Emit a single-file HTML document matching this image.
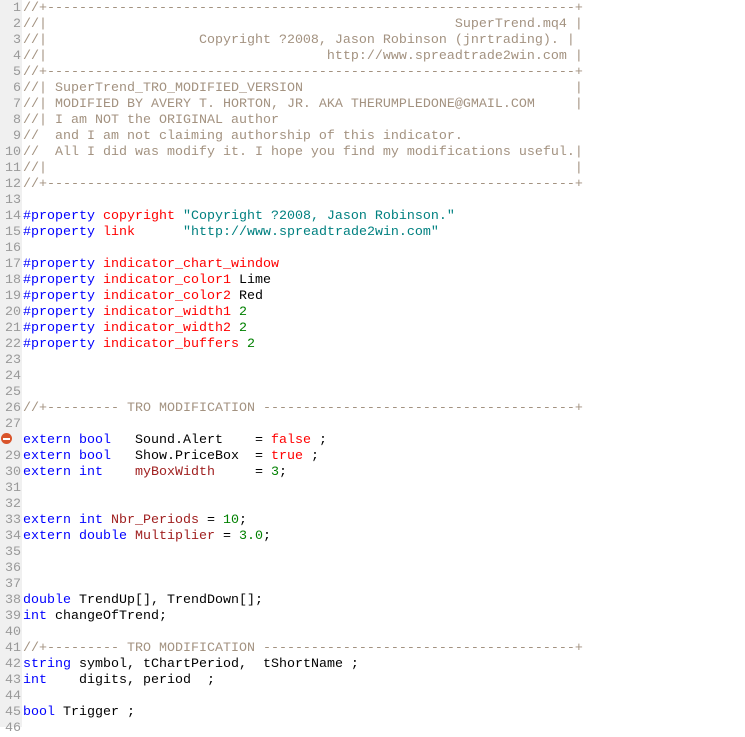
<!DOCTYPE html>
<html><head><meta charset="utf-8"><style>
html,body{margin:0;padding:0;background:#fff;width:745px;height:727px;overflow:hidden}
.g{position:absolute;left:0;top:0;width:22px;height:727px;background:#f0f0f0}
.n{position:absolute;left:0;top:1px;width:21px;text-align:right;font:13.33px/16px "Liberation Mono",monospace;color:#999;white-space:pre;margin:0}
.c{position:absolute;left:23px;top:1px;font:13.33px/16px "Liberation Mono",monospace;color:#000;white-space:pre;margin:0}
.m{color:#a39280}.k{color:#0000ff}.r{color:#ff0000}.s{color:#008080}.d{color:#008000}.v{color:#a02020}
.bp{position:absolute;left:1px;top:433px;width:11px;height:11px;border-radius:50%;background:#d9542b}
.bp:after{content:"";position:absolute;left:2px;top:4.5px;width:7px;height:2px;background:#fff}
</style></head><body>
<div class="g"></div>
<pre class="n">1
2
3
4
5
6
7
8
9
10
11
12
13
14
15
16
17
18
19
20
21
22
23
24
25
26
27
 
29
30
31
32
33
34
35
36
37
38
39
40
41
42
43
44
45
46</pre>
<div class="bp"></div>
<pre class="c"><span class="m">//+------------------------------------------------------------------+
//|                                                   SuperTrend.mq4 |
//|                   Copyright ?2008, Jason Robinson (jnrtrading). |
//|                                   http://www.spreadtrade2win.com |
//+------------------------------------------------------------------+
//| SuperTrend_TRO_MODIFIED_VERSION                                  |
//| MODIFIED BY AVERY T. HORTON, JR. AKA THERUMPLEDONE@GMAIL.COM     |
//| I am NOT the ORIGINAL author
//  and I am not claiming authorship of this indicator.
//  All I did was modify it. I hope you find my modifications useful.|
//|                                                                  |
//+------------------------------------------------------------------+</span>

<span class="k">#property</span> <span class="r">copyright</span> <span class="s">"Copyright ?2008, Jason Robinson."</span>
<span class="k">#property</span> <span class="r">link</span>      <span class="s">"http://www.spreadtrade2win.com"</span>

<span class="k">#property</span> <span class="r">indicator_chart_window</span>
<span class="k">#property</span> <span class="r">indicator_color1</span> Lime
<span class="k">#property</span> <span class="r">indicator_color2</span> Red
<span class="k">#property</span> <span class="r">indicator_width1</span> <span class="d">2</span>
<span class="k">#property</span> <span class="r">indicator_width2</span> <span class="d">2</span>
<span class="k">#property</span> <span class="r">indicator_buffers</span> <span class="d">2</span>



<span class="m">//+--------- TRO MODIFICATION ---------------------------------------+</span>

<span class="k">extern</span> <span class="k">bool</span>   Sound.Alert    = <span class="r">false</span> ;
<span class="k">extern</span> <span class="k">bool</span>   Show.PriceBox  = <span class="r">true</span> ;
<span class="k">extern</span> <span class="k">int</span>    <span class="v">myBoxWidth</span>     = <span class="d">3</span>;


<span class="k">extern</span> <span class="k">int</span> <span class="v">Nbr_Periods</span> = <span class="d">10</span>;
<span class="k">extern</span> <span class="k">double</span> <span class="v">Multiplier</span> = <span class="d">3.0</span>;



<span class="k">double</span> TrendUp[], TrendDown[];
<span class="k">int</span> changeOfTrend;

<span class="m">//+--------- TRO MODIFICATION ---------------------------------------+</span>
<span class="k">string</span> symbol, tChartPeriod,  tShortName ;
<span class="k">int</span>    digits, period  ;

<span class="k">bool</span> Trigger ;
</pre>
</body></html>
